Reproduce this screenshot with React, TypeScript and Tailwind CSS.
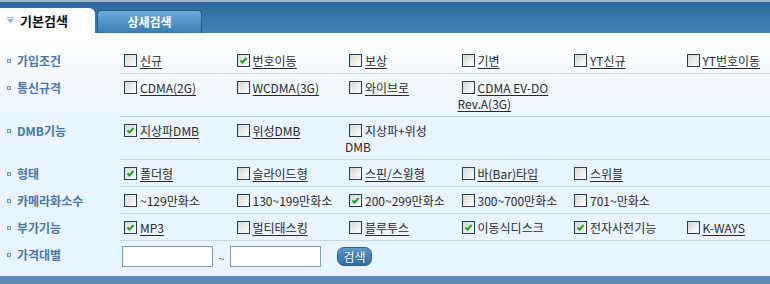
import React from "react";

type Opt = { label: string; checked?: boolean; link?: boolean };

const rows: { title: string; options: Opt[] }[] = [
  {
    title: "가입조건",
    options: [
      { label: "신규", link: true },
      { label: "번호이동", checked: true, link: true },
      { label: "보상", link: true },
      { label: "기변", link: true },
      { label: "YT신규", link: true },
      { label: "YT번호이동", link: true },
    ],
  },
  {
    title: "통신규격",
    options: [
      { label: "CDMA(2G)", link: true },
      { label: "WCDMA(3G)", link: true },
      { label: "와이브로", link: true },
      { label: "CDMA EV-DO\nRev.A(3G)", link: true },
    ],
  },
  {
    title: "DMB기능",
    options: [
      { label: "지상파DMB", checked: true, link: true },
      { label: "위성DMB", link: true },
      { label: "지상파+위성\nDMB" },
    ],
  },
  {
    title: "형태",
    options: [
      { label: "폴더형", checked: true, link: true },
      { label: "슬라이드형", link: true },
      { label: "스핀/스윙형", link: true },
      { label: "바(Bar)타입", link: true },
      { label: "스위블", link: true },
    ],
  },
  {
    title: "카메라화소수",
    options: [
      { label: "~129만화소" },
      { label: "130~199만화소" },
      { label: "200~299만화소", checked: true },
      { label: "300~700만화소" },
      { label: "701~만화소" },
    ],
  },
  {
    title: "부가기능",
    options: [
      { label: "MP3", checked: true, link: true },
      { label: "멀티태스킹", link: true },
      { label: "블루투스", link: true },
      { label: "이동식디스크", checked: true },
      { label: "전자사전기능", checked: true },
      { label: "K-WAYS", link: true },
    ],
  },
];

function Box({ checked }: { checked?: boolean }) {
  return (
    <span className="relative inline-block align-[-1px] w-[13px] h-[13px] ml-[4px] mr-[3px] border border-[#1d3f5f] bg-[linear-gradient(135deg,#d8d8d2,#ffffff)]">
      {checked && (
        <svg className="absolute left-0 top-0" width="11" height="11" viewBox="0 0 11 11">
          <path d="M2.5 5.5 L4.5 7.5 L8.5 3" fill="none" stroke="#21a121" strokeWidth="2" />
        </svg>
      )}
    </span>
  );
}

function Label({ title }: { title: string }) {
  return (
    <div className="w-[120px] shrink-0 pl-[7px] pt-[6px] flex items-start">
      <span className="flex items-center h-[16px]">
        <span className="w-[4px] h-[4px] border border-[#6a96c0] bg-[#d4e4f2]" />
        <span className="ml-[6px] text-[12px] leading-[16px] font-bold text-[#4a78a6]">{title}</span>
      </span>
    </div>
  );
}

export default function App() {
  return (
    <div className="w-[770px] h-[284px] overflow-hidden font-['Noto_Sans_CJK_KR','Noto_Sans',sans-serif] text-[12px] text-[#2a2a2a]">
      {/* tab bar */}
      <div className="h-[33px] border-t-2 border-[#9fb6cb] bg-gradient-to-b from-[#2b689d] to-[#4282b8] flex items-end">
        <div className="w-[95px] h-[25px] bg-white rounded-tr-[6px] flex items-center pl-[7px]">
          <svg width="7" height="7" viewBox="0 0 7 7">
            <rect x="0" y="0" width="7" height="1" fill="#9ab0c8" />
            <path d="M0 2 H7 L3.5 6.5 Z" fill="#9ab0c8" />
          </svg>
          <span className="ml-[6px] text-[13px] font-bold text-[#111]">기본검색</span>
        </div>
        <div className="ml-[2px] w-[105px] h-[23px] rounded-t-[4px] border border-b-0 border-[#27598a] bg-gradient-to-b from-[#6eaadb] to-[#3b7ab4] flex items-center justify-center">
          <span className="text-[12px] font-bold text-white">상세검색</span>
        </div>
      </div>

      {/* search form */}
      <div className="h-[243px] pt-[14px] bg-[linear-gradient(to_bottom,#ffffff_0px,#e9f4fd_90px,#e9f4fd_100%)]">
        {rows.map((row) => (
          <div key={row.title} className="flex">
            <Label title={row.title} />
            <div className="flex-1 pt-[6px] pb-[4px] border-b border-[#c3d7e7] grid grid-cols-[repeat(5,112.5px)_1fr] leading-[16px]">
              {row.options.map((o) => (
                <div key={o.label} className="pr-[2px] whitespace-pre-line">
                  <Box checked={o.checked} />
                  {o.link ? (
                    <span className="underline underline-offset-[2px]">{o.label}</span>
                  ) : (
                    <span>{o.label}</span>
                  )}
                </div>
              ))}
            </div>
          </div>
        ))}

        <div className="flex">
          <Label title="가격대별" />
          <div className="flex-1 pt-[5px] pb-[9px] flex items-center">
            <input className="ml-[2px] w-[91px] h-[21px] border border-[#7f9db9] bg-white" />
            <span className="w-[17px] text-center text-[11px] text-[#555] pt-[4px]">~</span>
            <input className="w-[91px] h-[21px] border border-[#7f9db9] bg-white" />
            <button className="ml-[16px] w-[35px] h-[19px] rounded-[7px] bg-gradient-to-b from-[#5e98c8] to-[#336f9f] border border-[#2d6190] text-white text-[12px] leading-[17px] [text-shadow:0_0_2px_#1e4a73]">
              검색
            </button>
          </div>
        </div>
      </div>

      <div className="h-[8px] bg-[#5f8ab4]" />
    </div>
  );
}
